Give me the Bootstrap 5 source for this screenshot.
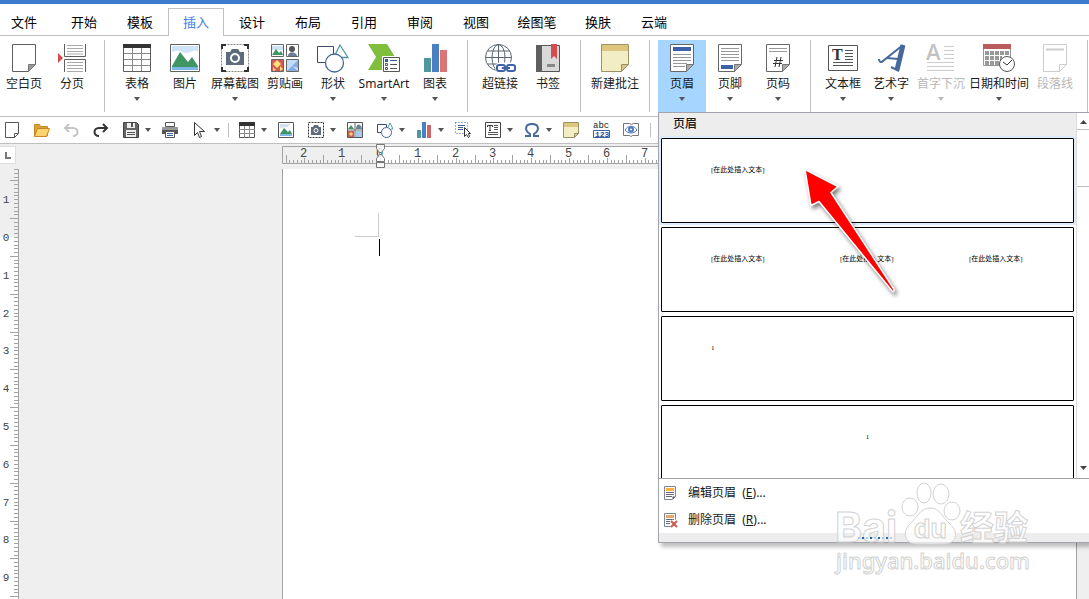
<!DOCTYPE html>
<html lang="zh-CN">
<head>
<meta charset="utf-8">
<meta name="viewport" content="width=device-width, initial-scale=1">
<title>文字处理 - 插入</title>
<link href="https://cdn.jsdelivr.net/npm/bootstrap@5.3.0/dist/css/bootstrap.min.css" rel="stylesheet">
<style>
:root{--line:#c0c0c0;--rule:#a3a3a3;--ink:#1a1a1a;--soft:#efefef}
body{font-family:"Noto Sans","Noto Sans CJK SC",sans-serif;font-size:12px;line-height:16px;color:var(--ink);background:#fff;overflow:hidden}
button{font:inherit;color:inherit}
svg{display:block;flex:none;overflow:visible}
.top-strip{height:4px;background:#3a7bd0}
/* ribbon tabs */
.ribbon-tabs{height:32px;padding-top:4px;border-bottom:1px solid var(--line);flex-wrap:nowrap}
.ribbon-tabs .nav-link{width:56px;height:28px;padding:0 0 1px;border:1px solid transparent;border-bottom:0;border-radius:0;color:#000;font-size:13px;line-height:26px;text-align:center;margin:0}
.ribbon-tabs .nav-link.active{color:#3d7de8;border-color:var(--line);background:#fff}
.ribbon-tabs .tab-file{width:48px;margin-right:8px}
.ribbon-tabs .tab-wide{width:66px}
/* ribbon */
.ribbon{height:81px;padding-top:4px;border-bottom:1px solid var(--line)}
.ribbon-group{height:72px;padding-right:8px;margin-right:8px;border-right:1px solid var(--line)}
.tool{width:48px;height:72px;padding:2px 0 0;border:0;background:none;display:flex;flex-direction:column;align-items:center;white-space:nowrap}
.tool.w52{width:52px}.tool.w54{width:54px}.tool.w64{width:64px}
.tool.open{background:#a6d6ff}
.tool:disabled{color:#b8b8b8}
.tool span{margin-top:2px;height:21px;line-height:16px}
.tri{width:6px;height:4px;background:#555;clip-path:polygon(0 0,100% 0,50% 100%)}
.tool:disabled .tri{background:#bbb}
/* quick bar */
.quick{height:27px;border-bottom:1px solid var(--line)}
.qbtn{width:30px;height:26px;padding:0 0 0 7px;border:0;background:none;display:flex;align-items:center;gap:6px}
.qbtn.pick{width:39px}
.qbtn.first{width:26px;padding-left:4px}
.qsep{width:1px;height:14px;background:var(--line);margin:0 3px 0 4px}
/* workspace */
.work{background:var(--soft);padding-top:2px}
.corner{width:16px;height:18px;background:#fff;border:1px solid #ddd;border-left:0;margin-right:266px}
.hruler{height:23px}
.vruler{width:19px;margin-right:263px}
.paper{background:#fff;border-left:1px solid var(--rule);border-right:1px solid var(--rule)}
.vscroll{width:12px}
.rule-num{font-family:"Liberation Mono",monospace;font-size:12px;fill:#444}
.rule-num.down{font-size:11px}
/* header gallery */
.gallery{top:100%;left:0;width:calc(100vw - 658px);padding:0;border:1px solid #a4a4ac;border-right:0;border-radius:0;font-size:12px;color:var(--ink);box-shadow:3px 4px 4px rgba(0,0,0,.25);margin:0;min-width:0}
.gallery-title{height:23px;padding-left:14px;background:#ededed;font-size:12px;line-height:22px;font-weight:500;margin:0}
.gallery-view{height:366px;border-bottom:1px solid var(--rule)}
.gallery-list{height:342px;overflow:hidden}
.thumb{display:block;width:100%;height:89px;padding:2px;border:0;background:#fff}
.thumb.hot{background:#dcecfd}
.sheet{height:85px;border:1px solid #000;border-radius:1px;background:#fff;padding:27px 0 0 49px;display:grid;grid-template-columns:129px 129px auto;text-align:left;align-content:start;font:7px/9px "Liberation Serif","Noto Sans CJK SC",serif;color:#000;white-space:nowrap}
.sheet.mid{display:block;padding-left:0;text-align:center}
.gscroll{width:13px;border-left:1px solid #ddd}
.gscroll .arrow-box{height:16px;padding-top:7px}
.gscroll .grab{height:58px;border:1px solid var(--line);border-width:1px 0;background:#fff}
.arr{width:7px;height:4px;background:#444;margin-left:3px}
.arr.up{clip-path:polygon(50% 0,100% 100%,0 100%)}
.arr.down{clip-path:polygon(0 0,100% 0,50% 100%)}
.gallery .dropdown-item{height:27px;padding:0 0 0 4px;display:flex;align-items:center;gap:10px;color:var(--ink)}
.grip{height:9px;background:#ededed;padding-left:4px}
.grip i{position:relative;z-index:2;width:2px;height:2px;background:#1f66b8;margin-right:2px}
.grip i:nth-child(2n+1){background:#a9cdee}
.pointer{position:absolute;left:138px;top:48px;pointer-events:none;filter:drop-shadow(2px 3px 2px rgba(0,0,0,.5))}
.brand{position:absolute;left:172px;top:366px;pointer-events:none}
</style>
</head>
<body>
<div class="d-flex flex-column vh-100">
<div class="top-strip"></div>
<nav class="nav ribbon-tabs" aria-label="功能区">
<a class="nav-link tab-file" href="#">文件</a><a class="nav-link" href="#">开始</a><a class="nav-link" href="#">模板</a><a class="nav-link active" href="#">插入</a><a class="nav-link" href="#">设计</a><a class="nav-link" href="#">布局</a><a class="nav-link" href="#">引用</a><a class="nav-link" href="#">审阅</a><a class="nav-link" href="#">视图</a><a class="nav-link tab-wide" href="#">绘图笔</a><a class="nav-link" href="#">换肤</a><a class="nav-link" href="#">云端</a>
</nav>

<div class="ribbon d-flex">
 <div class="ribbon-group d-flex">
  <button class="tool"><svg width="32" height="32" fill="none"><path d="M4.500 2.500h23v20l-7 7h-16z" fill="#fff" stroke="#5f5f5f"/><path d="M20.500 29.500v-7h7z" fill="#999" stroke="#777"/></svg><span>空白页</span></button>
  <button class="tool"><svg width="32" height="32" fill="none"><path d="M8.500 2v12.500h21V2M8.500 30V17.500h21V30" stroke="#5f5f5f"/><path d="M11 3.500h16M11 6.500h16M11 9.500h16M11 12h16M11 20.500h16M11 23.500h16M11 26.500h16M11 29.500h16" stroke="#aaa"/><path d="M2 11l5 5-5 5z" fill="#d94b4b"/></svg><span>分页</span></button>
 </div>
 <div class="ribbon-group d-flex">
  <button class="tool"><svg width="32" height="32" fill="none"><path d="M2.500 2.500h27v27h-27z" fill="#fff" stroke="#5f5f5f"/><path d="M2 2h28v4H2z" fill="#333"/><path d="M11.500 6v23M20.500 6v23M3 11.500h26M3 17.500h26M3 23.500h26" stroke="#888"/></svg><span>表格</span><i class="tri"></i></button>
  <button class="tool"><svg width="32" height="32"><path d="M1.500 2.500h29v27h-29z" fill="#fff" stroke="#5f5f5f"/><path d="M3 4h26v6c-4-4-8 2-12 1S9 7 3 10z" fill="#cfe3f5"/><path d="M3 24L11 10l8 10 4-5 6 9v2H3z" fill="#3f9563"/><path d="M3 25h26v3H3z" fill="#7db5e6"/></svg><span>图片</span></button>
  <button class="tool w52"><svg width="32" height="32"><path d="M2.500 2.500h27v27h-27z" fill="none" stroke="#888" stroke-dasharray="2 1"/><path d="M3 7V3h4M25 3h4v4M29 25v4h-4M7 29H3v-4" fill="none" stroke="#333" stroke-width="2"/><path d="M7 10h4l2-3h6l2 3h4v13H7z" fill="#5d6b7c"/><circle cx="16" cy="16" r="4" fill="#5d6b7c" stroke="#fff" stroke-width="2"/></svg><span>屏幕截图</span><i class="tri"></i></button>
  <button class="tool"><svg width="32" height="32"><g stroke="#666"><path d="M2.500 2.500h12v12h-12zM17.500 2.500h12v12h-12z" fill="#fff"/><path d="M2.500 17.500h12v12h-12z" fill="#d55b55"/><path d="M17.500 17.500h12v12h-12z" fill="#c5dcf7"/></g><path d="M3 4h11v4H3z" fill="#cfe3f5"/><path d="M3 13l4-6 3 4 2-2 2 4z" fill="#3f9563"/><circle cx="23" cy="7" r="3" fill="#555"/><path d="M19 14c0-5 8-5 9 0z" fill="#6b7f99"/><path d="M8 18l4 4-4 4-4-4zM4 25l3 3-3 1zM11 24l3 3-3 2z" fill="#ffe27a"/><path d="M18 29l5-5 6 5zM29 18l-6 6 6 2z" fill="#83aee6"/></svg><span>剪贴画</span></button>
  <button class="tool"><svg width="32" height="32" fill="none"><path d="M8.500 20.500h-8v-16h16v8" stroke="#3b4a6b"/><path d="M18.500 12L23 3l8 12.500h-6" stroke="#4e9aa0" stroke-width="1.300"/><circle cx="17.500" cy="21" r="9" stroke="#41669f" stroke-width="1.300"/></svg><span>形状</span><i class="tri"></i></button>
  <button class="tool w54"><svg width="32" height="32"><path d="M0 2h19l8 13-8 13H0l8-13z" fill="#80bf3c"/><path d="M14 14h18v17H14z" fill="#fff"/><path d="M15.500 15.500h16v14h-16z" fill="#fff" stroke="#555"/><path d="M17 17h3v3h-3z" fill="#2f5ca8"/><path d="M17.500 21.500h2v2h-2zM17.500 25.500h2v2h-2z" fill="none" stroke="#555"/><path d="M22 18.500h7" stroke="#2f5ca8"/><path d="M22 22.500h7M22 26.500h7" stroke="#555"/></svg><span>SmartArt</span><i class="tri"></i></button>
  <button class="tool"><svg width="32" height="32"><path d="M5 16h7v14H5z" fill="#4e979c"/><path d="M13 2h7v28h-7z" fill="#4a7fc1"/><path d="M21 8h7v22h-7z" fill="#db7575"/></svg><span>图表</span><i class="tri"></i></button>
 </div>
 <div class="ribbon-group d-flex">
  <button class="tool"><svg width="32" height="32" fill="none"><g stroke="#5a6470"><circle cx="14.500" cy="15.500" r="13"/><ellipse cx="14.500" cy="15.500" rx="6.500" ry="13"/><path d="M14.500 2.500v26M1.500 15.500h26M3.500 9h22M3.500 22h22"/></g><g stroke="#fff" stroke-width="5"><rect x="14" y="23" width="8" height="6" rx="2"/><rect x="22" y="23" width="8" height="6" rx="2"/></g><g stroke="#3f63a6" stroke-width="2"><rect x="13" y="23" width="8" height="6" rx="2"/><rect x="23" y="23" width="8" height="6" rx="2"/><path d="M18 26h8"/></g></svg><span>超链接</span></button>
  <button class="tool"><svg width="32" height="32"><path d="M4.500 3.500h23v26h-23z" fill="#d9d9d9" stroke="#555"/><path d="M4 3h6v27H4z" fill="#5f5f5f"/><path d="M19 2h6v15l-3-3-3 3z" fill="#d64b4f"/><path d="M15 22h8v3h-8z" fill="#888"/></svg><span>书签</span></button>
 </div>
 <div class="ribbon-group d-flex">
  <button class="tool w52"><svg width="32" height="32"><path d="M2.500 2.500h27v20l-7 7h-20z" fill="#f3edc4" stroke="#9c9068"/><path d="M3 3h26v6H3z" fill="#dec77c"/><path d="M22.500 29.500v-7h7z" fill="#dcc18b" stroke="#9c9068"/></svg><span>新建批注</span></button>
 </div>
 <div class="ribbon-group d-flex">
  <div class="dropdown">
   <button class="tool open" aria-expanded="true"><svg width="32" height="32"><path d="M4.500 2.500h23v20l-7 7h-16z" fill="#fff" stroke="#666"/><path d="M7 5h18v4H7z" fill="#3c61a8"/><path d="M7 12.500h18M7 15.500h18M7 18.500h18M7 21.500h14M7 24.500h12" stroke="#999"/><path d="M20.500 29.500v-7h7z" fill="#aaa" stroke="#777"/></svg><span>页眉</span><i class="tri"></i></button>
   <div class="dropdown-menu show gallery">
    <div class="gallery-view d-flex">
     <div class="flex-grow-1">
      <h6 class="gallery-title">页眉</h6>
      <div class="gallery-list">
       <button class="thumb hot"><span class="sheet"><span>[在此处插入文本]</span></span></button>
       <button class="thumb"><span class="sheet"><span>[在此处插入文本]</span><span>[在此处插入文本]</span><span>[在此处插入文本]</span></span></button>
       <button class="thumb"><span class="sheet"><span>1</span></span></button>
       <button class="thumb"><span class="sheet mid">1</span></button>
      </div>
     </div>
     <div class="gscroll d-flex flex-column">
      <div class="arrow-box"><div class="arr up"></div></div>
      <div class="grab"></div>
      <div class="arrow-box mt-auto pt-1"><div class="arr down"></div></div>
     </div>
    </div>
    <button class="dropdown-item"><svg width="15" height="16"><path d="M1.500 1.500h11v10l-3 3h-8z" fill="#fff" stroke="#7d8794"/><path d="M3 3h8v3H3z" fill="#ffb03b"/><path d="M3 7.500h8M3 9.500h8M3 11.500h6" stroke="#667"/><path d="M9.500 14.500v-3h3z" fill="#556"/></svg><span>编辑页眉&nbsp; (<u>E</u>)...</span></button>
    <button class="dropdown-item"><svg width="15" height="16"><path d="M1.500 1.500h11v13h-11z" fill="#fff" stroke="#7d8794"/><path d="M3 3h8v3H3z" fill="#e9a66c"/><path d="M3 7.500h8M3 9.500h4M3 11.500h4" stroke="#667"/><path d="M8 9l6 6M14 9l-6 6" stroke="#fff" stroke-width="4"/><path d="M8 9l6 6M14 9l-6 6" stroke="#cc5a50" stroke-width="2"/></svg><span>删除页眉&nbsp; (<u>R</u>)...</span></button>
    <div class="grip d-flex justify-content-center align-items-center"><i></i><i></i><i></i><i></i><i></i><i></i><i></i><i></i><i></i></div>
    <svg class="pointer" width="110" height="140"><path d="M8 8.500L41 25.500l-7 6L97.500 129l-1.500 2L22 40.500l-8 4z" fill="#f00" stroke="#fff" stroke-width="1.500" stroke-linejoin="round"/><path d="M60 80l36 50-30-46z" fill="#f00"/></svg>
    <svg class="brand" width="210" height="100" stroke="#d2d2d2" fill="#fff" fill-opacity=".7">
     <text x="4" y="63" font-family="Inter,sans-serif" font-weight="700" font-size="41">Bai</text>
     <g><ellipse cx="79" cy="28" rx="8" ry="9"/><ellipse cx="93" cy="14" rx="7" ry="10"/><ellipse cx="110" cy="15" rx="8" ry="10"/><ellipse cx="121" cy="32" rx="8" ry="9"/><path d="M99 29c10 0 12 9 20 16 9 8 7 20-6 20H86c-13 0-15-12-7-20 8-7 10-16 20-16z"/></g>
     <text x="83" y="59" font-family="Inter,sans-serif" font-weight="700" font-size="26">du</text>
     <text x="129" y="61" font-family="'Noto Sans CJK SC',sans-serif" font-weight="700" font-size="34">经验</text>
     <text x="5" y="90" font-family="'Noto Sans',sans-serif" font-weight="500" font-size="22">jingyan.baidu.com</text>
    </svg>
   </div>
  </div>
  <button class="tool"><svg width="32" height="32"><path d="M4.500 2.500h23v20l-7 7h-16z" fill="#fff" stroke="#666"/><path d="M7 6.500h18M7 9.500h18M7 12.500h18M7 15.500h18M7 18.500h18" stroke="#999"/><path d="M7 23h12v4H7z" fill="#3c61a8"/><path d="M20.500 29.500v-7h7z" fill="#aaa" stroke="#777"/></svg><span>页脚</span><i class="tri"></i></button>
  <button class="tool"><svg width="32" height="32"><path d="M4.500 2.500h23v20l-7 7h-16z" fill="#fff" stroke="#666"/><path d="M7 6.500h18M7 9.500h18" stroke="#999"/><path d="M15 15l-2 10M19 15l-2 10M12 18.500h9M11 21.500h9" stroke="#333"/><path d="M20.500 29.500v-7h7z" fill="#aaa" stroke="#777"/></svg><span>页码</span><i class="tri"></i></button>
 </div>
 <div class="ribbon-group d-flex">
  <button class="tool"><svg width="32" height="32"><path d="M1.500 3.500h29v25h-29z" fill="#fff" stroke="#555"/><text x="5" y="18" font-family="Liberation Serif,serif" font-weight="700" font-size="16" fill="#333">T</text><path d="M18 8.500h8M18 11.500h8M18 14.500h8M18 17.500h8M6 20.500h20M6 23.500h20" stroke="#555"/></svg><span>文本框</span><i class="tri"></i></button>
  <button class="tool"><svg width="32" height="32" fill="none" stroke="#46699b"><path d="M28 3L8 19c-2 2-4 1-4-2" stroke-width="2"/><path d="M28 3l-6 25" stroke-width="5"/><path d="M12 16l11 1" stroke-width="2"/><path d="M16 25l8 4" stroke-width="2"/></svg><span>艺术字</span><i class="tri"></i></button>
  <button class="tool w52" disabled><svg width="32" height="32"><text x="1" y="18" font-family="Open Sans,sans-serif" font-weight="600" font-size="22" fill="#c2c2c2">A</text><path d="M19 4.500h10M19 8.500h10M19 12.500h10M19 16.500h10M2 20.500h27M2 24.500h27M2 28.500h27" stroke="#ccc"/></svg><span>首字下沉</span><i class="tri"></i></button>
  <button class="tool w64"><svg width="32" height="32"><path d="M.5 5v18.500H17M27.500 5v10" fill="none" stroke="#999"/><path d="M0 2h28v5H0z" fill="#ba5c5c"/><path d="M2 11h24M2 16h17M2 21h14" stroke="#999" stroke-width="4" stroke-dasharray="4 1"/><circle cx="24" cy="22" r="7.500" fill="#fff" stroke="#555"/><path d="M20 20l4 3 5-5" fill="none" stroke="#333"/></svg><span>日期和时间</span><i class="tri"></i></button>
  <button class="tool" disabled><svg width="32" height="32" fill="none" stroke="#ccc"><path d="M4.500 2.500h23v20l-7 7h-16zM20.500 29.500v-7h7"/><path d="M7 7.500h18" stroke-width="2"/></svg><span>段落线</span></button>
 </div>
</div>

<div class="quick d-flex align-items-center">
 <button class="qbtn first" aria-label="新建"><svg width="16" height="16"><path d="M1.500.5h13v11l-4 4h-9z" fill="#fff" stroke="#555"/><path d="M10.500 15.500v-4h4" fill="none" stroke="#555"/></svg></button>
 <button class="qbtn" aria-label="打开"><svg width="18" height="16"><path d="M1.500 14V2.500h5l1 2h7V14z" fill="#d9a03a" stroke="#c58a22"/><path d="M1.500 14.500l3-8h12l-3 8z" fill="#ffd36e" stroke="#c58a22"/></svg></button>
 <button class="qbtn" aria-label="撤销"><svg width="16" height="16" fill="none" stroke="#c4c4c4" stroke-width="2"><path d="M6 2L2 6l4 4M2 6h8c6 0 6 8 0 8"/></svg></button>
 <button class="qbtn" aria-label="重做"><svg width="16" height="16" fill="none" stroke="#333" stroke-width="2"><path d="M10 2l4 4-4 4M14 6H6c-6 0-6 8 0 8"/></svg></button>
 <button class="qbtn pick" aria-label="保存"><svg width="16" height="16"><path d="M.5.5h13l2 2v13H.5z" fill="#666" stroke="#444"/><path d="M4 1h8v5H4zM3 8h10v7H3z" fill="#eee"/><path d="M8 1h2v4H8zM4 10h8v1H4zM4 12h8v1H4z" fill="#555"/></svg><i class="tri"></i></button>
 <button class="qbtn" aria-label="打印"><svg width="16" height="16"><path d="M0 5h16v7H0z" fill="#555"/><path d="M3.500.5h9v4h-9z" fill="#fff" stroke="#555"/><path d="M0 5h16v3H0z" fill="#999"/><path d="M3.500 9.500h9v6h-9z" fill="#fff" stroke="#555"/><path d="M5 11.500h6M5 13.500h6" stroke="#3c61a8"/></svg></button>
 <button class="qbtn pick" aria-label="选择"><svg width="16" height="16"><path d="M2.500.5v13l3-3 2 5 2-1-2-5h5z" fill="#fff" stroke="#333"/></svg><i class="tri"></i></button>
 <div class="qsep"></div>
 <button class="qbtn pick" aria-label="表格"><svg width="16" height="16"><path d="M.5.5h15v15H.5z" fill="#fff" stroke="#555"/><path d="M0 0h16v4H0z" fill="#333"/><path d="M5.500 4v12M10.500 4v12M0 7.500h16M0 11.500h16" stroke="#888"/></svg><i class="tri"></i></button>
 <button class="qbtn" aria-label="图片"><svg width="16" height="16"><path d="M.5.5h15v15H.5z" fill="#fff" stroke="#555"/><path d="M2 2h10l-2 3-8 1z" fill="#cfe3f5"/><path d="M2 12l4-6 4 4 2-2 2 4z" fill="#3f9563"/><path d="M2 12h12v2H2z" fill="#7db5e6"/></svg></button>
 <button class="qbtn pick" aria-label="屏幕截图"><svg width="16" height="16"><path d="M.5.5h15v15H.5z" fill="none" stroke="#333" stroke-dasharray="2 1"/><path d="M3 5h2l1-2h4l1 2h2v8H3z" fill="#5d6b7c"/><circle cx="8" cy="8.500" r="2" fill="#5d6b7c" stroke="#fff"/></svg><i class="tri"></i></button>
 <button class="qbtn" aria-label="剪贴画"><svg width="16" height="16"><path d="M.5.5h15v15H.5z" fill="#fff" stroke="#555"/><path d="M1 7l3-4 3 4z" fill="#3f9563"/><path d="M9 7c0-6 5-6 6 0z" fill="#6b7f99"/><path d="M1 9h6v6H1z" fill="#d55b55"/><path d="M9 9h6v6H9z" fill="#a8c8ee"/><path d="M8 0v16M0 8h16" stroke="#666"/><path d="M4 10l2 2-2 2-2-2z" fill="#ffe27a"/></svg></button>
 <button class="qbtn pick" aria-label="形状"><svg width="16" height="16" fill="none"><path d="M4 10.500H.5v-8h9V5" stroke="#3b4a6b"/><path d="M11 5l2-4 3 6h-2" stroke="#4e9aa0"/><circle cx="9.500" cy="10.500" r="5" stroke="#41669f"/></svg><i class="tri"></i></button>
 <button class="qbtn pick" aria-label="图表"><svg width="16" height="16"><path d="M1 8h4v8H1z" fill="#4e979c"/><path d="M6 0h4v16H6z" fill="#4a7fc1"/><path d="M11 3h4v13h-4z" fill="#cf6565"/></svg><i class="tri"></i></button>
 <button class="qbtn" aria-label="选择对象"><svg width="16" height="16" fill="none"><path d="M.5.5h12v11H.5z" stroke="#3c61a8" stroke-dasharray="1 2"/><path d="M3 3.500h7M3 5.500h5M3 7.500h5" stroke="#3c61a8"/><path d="M9.500 5.500v9l2-2 2 3 1-1-1-3h2z" fill="#fff" stroke="#333"/></svg></button>
 <button class="qbtn pick" aria-label="文本框"><svg width="16" height="16"><path d="M.5.5h15v15H.5z" fill="#fff" stroke="#444"/><path d="M2.500 5V3.500h5V5M5 3v5M4 8.500h2" fill="none" stroke="#333"/><path d="M9 3.500h4M9 5.500h4M9 7.500h4M3 10.500h10M3 12.500h10" stroke="#555"/></svg><i class="tri"></i></button>
 <button class="qbtn pick" aria-label="符号"><svg width="16" height="16" fill="none" stroke="#46699b" stroke-width="2"><path d="M1 14h5v-2C0 8 1 2 8 2s8 6 2 10v2h5"/></svg><i class="tri"></i></button>
 <button class="qbtn" aria-label="批注"><svg width="16" height="16"><path d="M.5.500h15v11l-4 4H.5z" fill="#f3edc4" stroke="#9c9068"/><path d="M1 1h14v4H1z" fill="#dec77c"/><path d="M11.500 15.500v-4h4z" fill="#dcc18b" stroke="#9c9068"/></svg></button>
 <button class="qbtn" aria-label="字数统计"><svg width="18" height="18"><text x="0" y="7" font-family="Liberation Mono,monospace" font-size="9" fill="#222">abc</text><path d="M.5 9.500h16v7H.5z" fill="#fff" stroke="#3c61a8"/><text x="2" y="16" font-family="Liberation Mono,monospace" font-weight="700" font-size="8" fill="#2b4d92">123</text></svg></button>
 <button class="qbtn" aria-label="阅读"><svg width="16" height="16" fill="none"><path d="M.5 1.500v12h6l1.500 1 1.500-1h6v-12h-5l-2 1-2-1z" stroke="#777"/><path d="M2 8c3-5 9-5 12 0-3 4-9 4-12 0z" fill="#fff" stroke="#4f79bd"/><circle cx="8" cy="7.500" r="2" stroke="#4f79bd" stroke-width="2"/></svg></button>
 <div class="qsep"></div>
</div>

<main class="work flex-grow-1 d-flex flex-column">
 <div class="d-flex">
  <div class="corner"><svg width="12" height="12"><path d="M6 5v6h5" fill="none" stroke="#777" stroke-width="2"/></svg></div>
  <svg class="hruler flex-grow-1" id="hr" role="img" aria-label="水平标尺"></svg>
 </div>
 <div class="d-flex flex-grow-1 overflow-hidden">
  <svg class="vruler" id="vr" role="img" aria-label="垂直标尺"></svg>
  <div class="paper flex-grow-1"><svg width="110" height="100"><path d="M72 67.500h24M95.500 44v24" fill="none" stroke="#ccc"/><path d="M96.500 70v17" stroke="#000"/></svg></div>
  <div class="vscroll"></div>
 </div>
</main>
</div>
<script src="https://cdn.jsdelivr.net/npm/bootstrap@5.3.0/dist/js/bootstrap.bundle.min.js"></script>
<script>
// Rulers: one centimetre is 37.8 px, with a tick each millimetre and a taller one at each half.
const MM = 3.78;
const hr = document.getElementById('hr'), vr = document.getElementById('vr');
const w = Math.round(hr.getBoundingClientRect().width), hgt = Math.round(vr.getBoundingClientRect().height);
let h = `<rect x="98" width="${w - 98}" height="18" fill="#fff"/><path d="M${w} .5H.5v17H${w}" fill="none" stroke="#a3a3a3"/>`;
let t = '';
for (let i = -25; 98 + i * MM < w - 8; i++) {
  const x = Math.round(98 + i * MM) + .5;
  const top = i % 10 === 0 ? 12 : i % 5 === 0 ? 9 : 14;
  t += `M${x} ${top}V17`;
  if (i % 10 === 0) h += `<text class="rule-num" text-anchor="middle" x="${x - 1}" y="11">${Math.abs(i / 10)}</text>`;
}
h += `<path d="${t}" stroke="#a3a3a3"/><g fill="#fff" fill-opacity=".8" stroke="#777"><path d="M94.500 -1.500v4l3 4h2l3-4v-4zM94.500 15.500v-3l3-4h2l3 4v3z"/><path d="M94.500 16.500h8v5h-8z"/></g>`;
hr.innerHTML = h;
let v = `<rect y="68" width="18" height="${hgt - 68}" fill="#fff"/>`;
t = `M18.500 0V${hgt}M14 .5h4`;
for (let i = -17; 68 + i * MM < hgt - 1; i++) {
  const y = Math.round(68 + i * MM) + .5;
  t += `M${i % 5 === 0 && i % 10 !== 0 ? 10 : 14} ${y}H18`;
  if (i % 10 === 0) v += `<text class="rule-num down" text-anchor="middle" x="6" y="${y + 3}">${Math.abs(i / 10)}</text>`;
}
vr.innerHTML = v + `<path d="${t}" stroke="#a3a3a3"/>`;
</script>
</body>
</html>
